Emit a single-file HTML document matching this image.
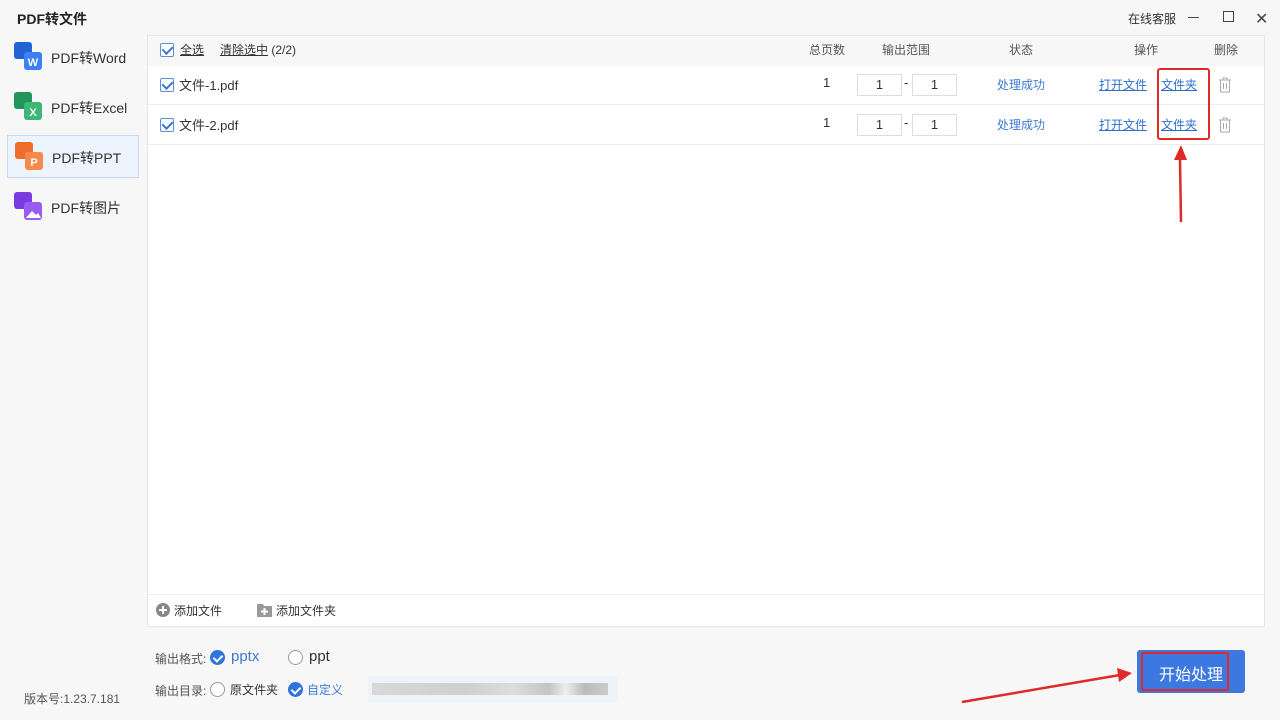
<!DOCTYPE html>
<html><head><meta charset="utf-8"><style>
*{margin:0;padding:0;box-sizing:border-box}
body{width:1280px;height:720px;background:#f7f7f7;font-family:"Liberation Sans","Noto Sans CJK SC",sans-serif;font-size:13px;color:#333;position:relative;overflow:hidden}
.a{position:absolute}
.title{left:17px;top:9px;font-size:14px;font-weight:bold;color:#222}
.side{left:0;top:35px;width:146px}
.item{position:absolute;left:7px;width:132px;height:43px}
.item.sel{background:#edf4fd;border:1px solid #c8daf3}
.item span{position:absolute;left:44px;top:12px;font-size:14px;color:#333}
.ic{position:absolute;left:6px;top:6px;width:30px;height:30px}
.panel{left:147px;top:35px;width:1118px;height:592px;background:#fff;border:1px solid #e6e6e6}
.hdr{left:0;top:0;width:1116px;height:30px;background:#f7f7f7}
.cb{position:absolute;width:14px;height:14px;border:1px solid #5b8ed6;border-radius:2px;background:#fff}
.cb:after{content:"";position:absolute;left:3px;top:0px;width:5px;height:8px;border:solid #3a78d4;border-width:0 2px 2px 0;transform:rotate(45deg)}
.row{left:0;width:1116px;height:40px;border-bottom:1px solid #eee}
.inp{position:absolute;width:45px;height:22px;border:1px solid #ddd;text-align:center;line-height:20px;color:#333}
.link{color:#2c6fcf;text-decoration:underline}
.blue{color:#3d7ad5}
.gray{color:#555}
.rad{position:absolute;width:15px;height:15px;border-radius:50%;border:1px solid #999;background:#fff}
.rad.on{background:#2f74da;border-color:#2f74da}
.rad.on:after{content:"";position:absolute;left:4px;top:2px;width:4px;height:7px;border:solid #fff;border-width:0 2px 2px 0;transform:rotate(45deg)}
</style></head><body>
<div class="a title">PDF转文件</div>
<div class="a" style="left:1128px;top:10px;font-size:12px;color:#333">在线客服</div>
<div class="a" style="left:1188px;top:17px;width:11px;height:1px;background:#444"></div>
<div class="a" style="left:1223px;top:11px;width:11px;height:11px;border:1px solid #444"></div>
<div class="a" style="left:1255px;top:9px;font-size:16px;color:#444">✕</div>

<div class="a side">
 <div class="item" style="top:1px"><svg class="ic" viewBox="0 0 30 30"><rect x="1" y="0" width="18" height="17" rx="3" fill="#2363d6"/><rect x="11" y="10" width="18" height="18" rx="3" fill="#3b82f0"/><text x="20" y="24" font-size="11" font-weight="bold" fill="#fff" text-anchor="middle" font-family="Liberation Sans">W</text></svg><span>PDF转Word</span></div>
 <div class="item" style="top:51px"><svg class="ic" viewBox="0 0 30 30"><rect x="1" y="0" width="18" height="17" rx="3" fill="#22955a"/><rect x="11" y="10" width="18" height="18" rx="3" fill="#3cb776"/><text x="20" y="24" font-size="11" font-weight="bold" fill="#fff" text-anchor="middle" font-family="Liberation Sans">X</text></svg><span>PDF转Excel</span></div>
 <div class="item sel" style="top:100px"><svg class="ic" viewBox="0 0 30 30"><rect x="1" y="0" width="18" height="17" rx="3" fill="#ee6f2b"/><rect x="11" y="10" width="18" height="18" rx="3" fill="#f58a4b"/><text x="20" y="24" font-size="11" font-weight="bold" fill="#fff" text-anchor="middle" font-family="Liberation Sans">P</text></svg><span>PDF转PPT</span></div>
 <div class="item" style="top:151px"><svg class="ic" viewBox="0 0 30 30"><rect x="1" y="0" width="18" height="17" rx="3" fill="#7a3be0"/><rect x="11" y="10" width="18" height="18" rx="3" fill="#9a5cf0"/><path d="M13 26 L19 19 L23 23 L25 21 L28 26Z" fill="#fff"/></svg><span>PDF转图片</span></div>
</div>
<div class="a" style="left:24px;top:690px;font-size:12px;color:#555">版本号:1.23.7.181</div>

<div class="a panel">
 <div class="a hdr">
  <div class="cb" style="left:12px;top:7px"></div>
  <div class="a" style="left:32px;top:5px;font-size:12px;text-decoration:underline">全选</div>
  <div class="a" style="left:72px;top:5px;font-size:12px"><span style="text-decoration:underline">清除选中</span> (2/2)</div>
  <div class="a gray" style="left:661px;top:5px;font-size:12px">总页数</div>
  <div class="a gray" style="left:734px;top:5px;font-size:12px">输出范围</div>
  <div class="a gray" style="left:861px;top:5px;font-size:12px">状态</div>
  <div class="a gray" style="left:986px;top:5px;font-size:12px">操作</div>
  <div class="a gray" style="left:1066px;top:5px;font-size:12px">删除</div>
 </div>
 <div class="a row" style="top:29px">
  <div class="cb" style="left:12px;top:13px"></div>
  <div class="a" style="left:31px;top:10px">文件-1.pdf</div>
  <div class="a" style="left:675px;top:10px">1</div>
  <div class="inp" style="left:709px;top:9px">1</div><div class="a" style="left:756px;top:10px">-</div><div class="inp" style="left:764px;top:9px">1</div>
  <div class="a blue" style="left:849px;top:11px;font-size:12px">处理成功</div>
  <div class="a link" style="left:951px;top:11px;font-size:12px">打开文件</div>
  <div class="a link" style="left:1013px;top:11px;font-size:12px">文件夹</div>
  <svg class="a" style="left:1070px;top:12px" width="14" height="16" viewBox="0 0 14 16"><path d="M1 3H13M5 3V1H9V3M2.5 3V15H11.5V3M5.5 6V12M8.5 6V12" fill="none" stroke="#aaa" stroke-width="1"/></svg>
 </div>
 <div class="a row" style="top:69px">
  <div class="cb" style="left:12px;top:13px"></div>
  <div class="a" style="left:31px;top:10px">文件-2.pdf</div>
  <div class="a" style="left:675px;top:10px">1</div>
  <div class="inp" style="left:709px;top:9px">1</div><div class="a" style="left:756px;top:10px">-</div><div class="inp" style="left:764px;top:9px">1</div>
  <div class="a blue" style="left:849px;top:11px;font-size:12px">处理成功</div>
  <div class="a link" style="left:951px;top:11px;font-size:12px">打开文件</div>
  <div class="a link" style="left:1013px;top:11px;font-size:12px">文件夹</div>
  <svg class="a" style="left:1070px;top:12px" width="14" height="16" viewBox="0 0 14 16"><path d="M1 3H13M5 3V1H9V3M2.5 3V15H11.5V3M5.5 6V12M8.5 6V12" fill="none" stroke="#aaa" stroke-width="1"/></svg>
 </div>
 <div class="a" style="left:1009px;top:32px;width:53px;height:72px;border:2px solid #e02a2a;border-radius:3px"></div>
 <div class="a" style="left:0;top:558px;width:1116px;height:1px;background:#eee"></div>
 <svg class="a" style="left:8px;top:567px" width="14" height="14"><circle cx="7" cy="7" r="7" fill="#888"/><path d="M7 3V11M3 7H11" stroke="#fff" stroke-width="2"/></svg>
 <div class="a" style="left:26px;top:566px;font-size:12px">添加文件</div>
 <svg class="a" style="left:109px;top:567px" width="15" height="14"><path d="M0 1H6L7 3H15V14H0Z" fill="#999"/><path d="M7.5 5V12M4 8.5H11" stroke="#fff" stroke-width="2"/></svg>
 <div class="a" style="left:128px;top:566px;font-size:12px">添加文件夹</div>
</div>

<svg class="a" style="left:0;top:0" width="1280" height="720"><path d="M1181 222 L1180 160" stroke="#e02a2a" stroke-width="2.5"/><path d="M1174 160 L1181 145 L1187 160Z" fill="#e02a2a"/><path d="M962 702 L1120 675" stroke="#e02a2a" stroke-width="2.5"/><path d="M1117 668 L1132 673 L1119 682Z" fill="#e02a2a"/></svg>

<div class="a" style="left:155px;top:650px;font-size:12px;color:#555">输出格式:</div>
<div class="rad on" style="left:210px;top:650px"></div>
<div class="a blue" style="left:231px;top:648px;font-size:15px">pptx</div>
<div class="rad" style="left:288px;top:650px"></div>
<div class="a" style="left:309px;top:648px;font-size:15px">ppt</div>
<div class="a" style="left:155px;top:682px;font-size:12px;color:#555">输出目录:</div>
<div class="rad" style="left:210px;top:682px"></div>
<div class="a" style="left:230px;top:681px;font-size:12px">原文件夹</div>
<div class="rad on" style="left:288px;top:682px"></div>
<div class="a blue" style="left:307px;top:681px;font-size:12px">自定义</div>
<div class="a" style="left:368px;top:676px;width:250px;height:26px;background:#eef3fa"></div>
<div class="a" style="left:372px;top:683px;width:236px;height:12px;background:linear-gradient(90deg,#d8d8d8,#cfcfcf 40%,#ddd 60%,#c4c4c4 75%,#eee 82%,#bbb 90%,#ccc)"></div>

<div class="a" style="left:1137px;top:650px;width:108px;height:43px;background:#3b78e0;border-radius:3px"></div>
<div class="a" style="left:1141px;top:652px;width:88px;height:39px;border:2px solid #e02a2a;border-radius:2px"></div>
<div class="a" style="left:1159px;top:661px;font-size:16px;color:#fff">开始处理</div>
</body></html>
